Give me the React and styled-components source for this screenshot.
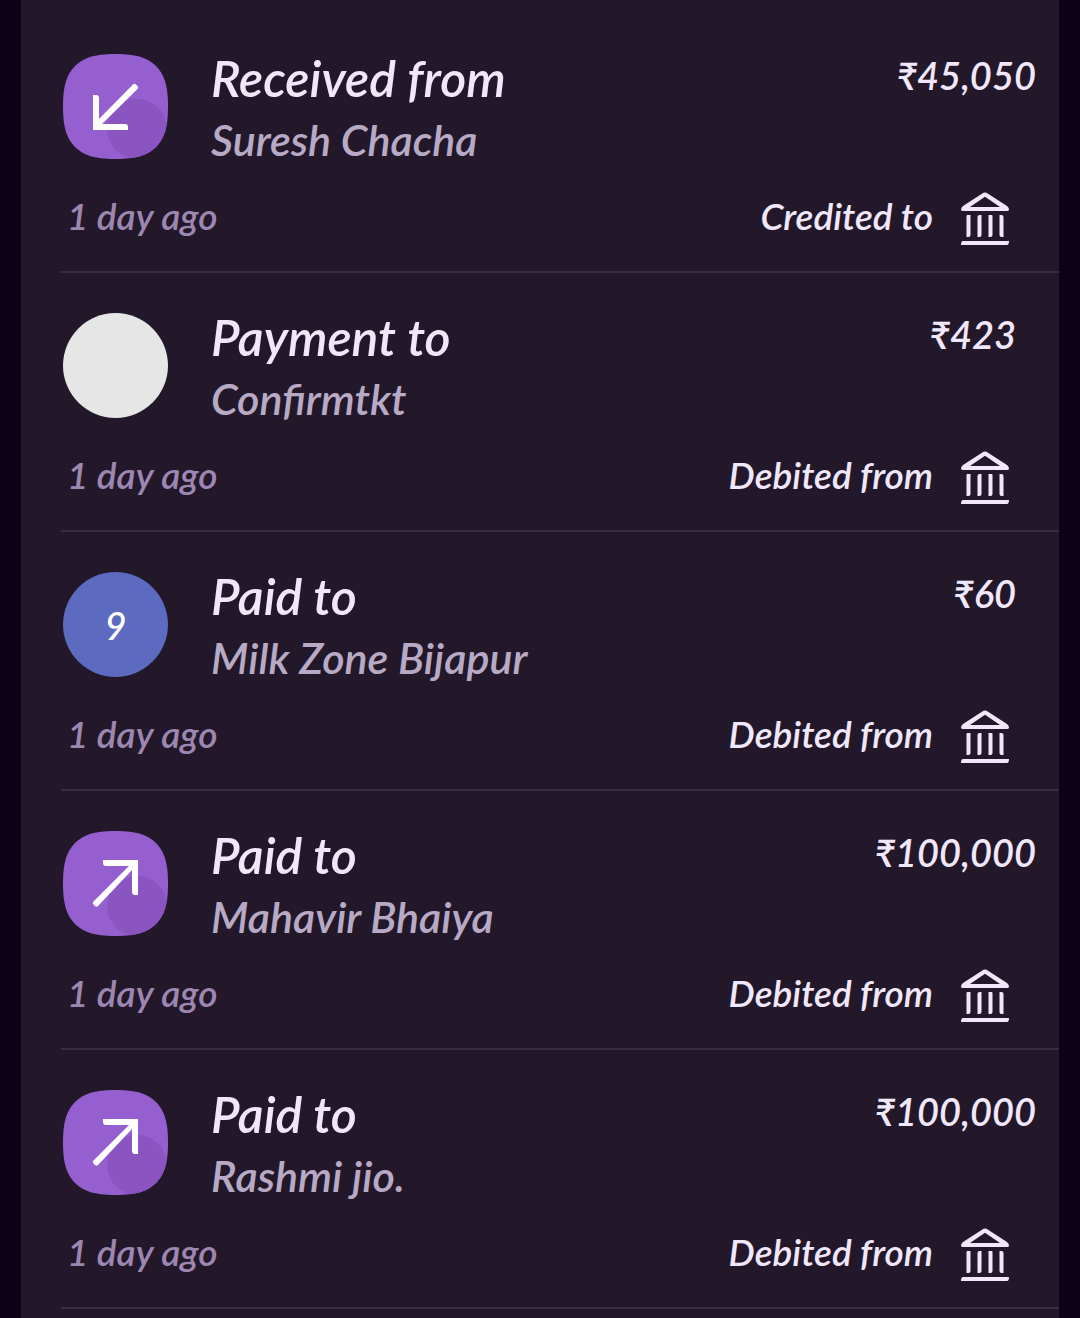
import React, { useId } from "react";
import styled, { createGlobalStyle } from "styled-components";

const GlobalStyle = createGlobalStyle`
  * {
    box-sizing: border-box;
  }
  body {
    margin: 0;
    background: #0d0217;
  }
`;

const Page = styled.main`
  min-height: 100vh;
  padding: 0 21px;
  display: flex;
  background: #0d0217;
  color: #f1e7fb;
  font-family: Lato, "Noto Sans", sans-serif;
  font-style: italic;
  font-weight: 600;
`;

const Panel = styled.section`
  flex: 1;
  min-width: 0;
  padding: 14px 0 0 40px;
  background: #22182a;
`;

const List = styled.ul`
  margin: 0;
  padding: 0;
  list-style: none;
`;

const Row = styled.li`
  padding: 40px 0 26px 2px;
  border-bottom: 2px solid #372e41;
  &:last-child {
    margin-bottom: 8px;
  }
`;

const Summary = styled.div`
  display: flex;
  align-items: flex-start;
  gap: 43px;
`;

const Disc = styled.div`
  flex: none;
  display: grid;
  place-items: center;
  width: 105px;
  height: 105px;
  border-radius: 50%;
  background: ${(p) => p.$fill};
  color: #fff;
  font-size: 38px;
  line-height: 42px;
  font-weight: 500;
`;

const TileSvg = styled.svg`
  flex: none;
  display: block;
  width: 105px;
  height: 105px;
`;

const Names = styled.div`
  flex: 1;
  min-width: 0;
`;

const Title = styled.h2`
  margin: 0;
  font-size: 50px;
  line-height: 48px;
  font-weight: 600;
`;

const Party = styled.p`
  margin: 0;
  padding-top: 14px;
  font-size: 43px;
  line-height: 48px;
  color: #b8aac5;
`;

const Amount = styled.span`
  padding-right: ${(p) => (p.$long ? "23px" : "43px")};
  font-size: 38px;
  line-height: 42px;
  white-space: nowrap;
`;

const Footer = styled.div`
  display: flex;
  align-items: flex-start;
  justify-content: space-between;
  margin-top: 28px;
  padding: 0 50px 0 4px;
`;

const Time = styled.time`
  font-size: 37px;
  line-height: 48px;
  color: #9d87b1;
`;

const Account = styled.span`
  display: flex;
  align-items: flex-start;
  gap: 28px;
  font-size: 37px;
  line-height: 48px;
`;

const BankSvg = styled.svg`
  display: block;
  width: 48px;
  height: 53px;
`;

const squircle =
  "M52.500 0C64 0 71 1 78 3C90 7 98 15 102 27C104 34 105 41 105 52.500C105 64 104 71 102 78C98 90 90 98 78 102C71 104 64 105 52.500 105C41 105 34 104 27 102C15 98 7 90 3 78C1 71 0 64 0 52.500C0 41 1 34 3 27C7 15 15 7 27 3C34 1 41 0 52.500 0Z";

function ArrowTile({ incoming }) {
  const clip = useId();
  return (
    <TileSvg viewBox="0 0 105 105" aria-hidden="true">
      <clipPath id={clip}>
        <path d={squircle} />
      </clipPath>
      <path d={squircle} fill="#965fd0" />
      <circle cx="74" cy="75" r="30" fill="#8a55c0" clipPath={`url(#${clip})`} />
      {incoming ? (
        <path
          d="M30 41H33Q36 41 36 44V65L70 30.500Q71.500 29 73 30.500L74.500 32Q76 33.500 74.500 35L39 70H62Q65 70 65 73V76H30Z"
          fill="#fff"
        />
      ) : (
        <path
          d="M40 29H75V64H72Q69 64 69 61V39L35 75Q33.500 76.500 32 75L30.500 73.500Q29 72 30.500 70.500L66 35H43Q40 35 40 32Z"
          fill="#fff"
        />
      )}
    </TileSvg>
  );
}

function BankIcon() {
  return (
    <BankSvg viewBox="0 0 48 53" aria-hidden="true">
      <path
        fill="#f1e7fb"
        fillRule="evenodd"
        d="M22.500 .8Q24 0 25.500 .8L46 14Q48 15.500 48 17.500Q48 19 46 19H2Q0 19 0 17.500Q0 15.500 2 14ZM24 4.800L9 15H39Z"
      />
      <path
        fill="#f1e7fb"
        d="M5.500 24Q5.500 23 6.500 23H9.500V43Q9.500 45 7.500 45H5.500ZM16.500 25Q16.500 23 18.500 23H20.500V43Q20.500 45 18.500 45H16.500ZM27.500 23H30.500Q31.500 23 31.500 24V43Q31.500 45 29.500 45H27.500ZM38.500 23H40.500Q42.500 23 42.500 25V45H40.500Q38.500 45 38.500 43ZM2 49H48Q48 53 46 53H0Q0 49 2 49Z"
      />
    </BankSvg>
  );
}

function Avatar({ kind }) {
  if (kind === "blank") return <Disc $fill="#e6e6e6" />;
  if (kind === "number") return <Disc $fill="#5c6abf">9</Disc>;
  return <ArrowTile incoming={kind === "incoming"} />;
}

const payments = [
  { kind: "incoming", title: "Received from", party: "Suresh Chacha", amount: "₹45,050", account: "Credited to" },
  { kind: "blank", title: "Payment to", party: "Confirmtkt", amount: "₹423", account: "Debited from" },
  { kind: "number", title: "Paid to", party: "Milk Zone Bijapur", amount: "₹60", account: "Debited from" },
  { kind: "outgoing", title: "Paid to", party: "Mahavir Bhaiya", amount: "₹100,000", account: "Debited from" },
  { kind: "outgoing", title: "Paid to", party: "Rashmi jio.", amount: "₹100,000", account: "Debited from" },
];

export default function App() {
  return (
    <>
      <GlobalStyle />
      <Page>
        <Panel>
          <List>
            {payments.map((item) => (
              <Row key={item.party}>
                <Summary>
                  <Avatar kind={item.kind} />
                  <Names>
                    <Title>{item.title}</Title>
                    <Party>{item.party}</Party>
                  </Names>
                  <Amount $long={item.amount.length > 4}>{item.amount}</Amount>
                </Summary>
                <Footer>
                  <Time>1 day ago</Time>
                  <Account>
                    {item.account}
                    <BankIcon />
                  </Account>
                </Footer>
              </Row>
            ))}
          </List>
        </Panel>
      </Page>
    </>
  );
}
